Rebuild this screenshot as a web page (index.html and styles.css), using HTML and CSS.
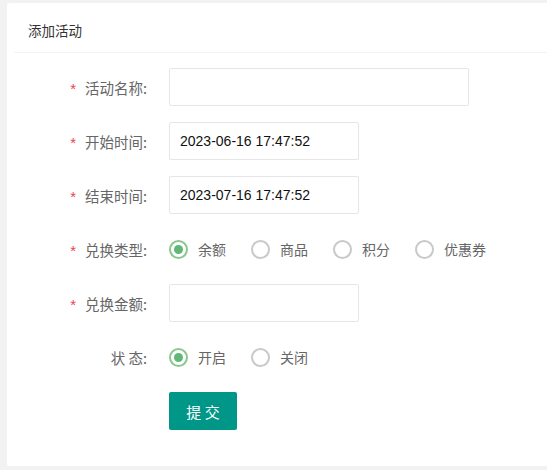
FILE: index.html
```html
<!DOCTYPE html>
<html lang="zh">
<head>
<meta charset="utf-8">
<link rel="stylesheet" href="styles.css">
</head>
<body>
<div class="card">
  <div class="card-header">添加活动</div>
  <form class="card-body">
    <div class="row">
      <label class="label"><span class="req">*</span>活动名称:</label>
      <input class="input wide" type="text" value="">
    </div>
    <div class="row">
      <label class="label"><span class="req">*</span>开始时间:</label>
      <input class="input" type="text" value="2023-06-16 17:47:52">
    </div>
    <div class="row">
      <label class="label"><span class="req">*</span>结束时间:</label>
      <input class="input" type="text" value="2023-07-16 17:47:52">
    </div>
    <div class="row">
      <label class="label"><span class="req">*</span>兑换类型:</label>
      <div class="radios">
        <span class="radio on"><i class="dot"></i>余额</span>
        <span class="radio"><i class="dot"></i>商品</span>
        <span class="radio"><i class="dot"></i>积分</span>
        <span class="radio"><i class="dot"></i>优惠券</span>
      </div>
    </div>
    <div class="row">
      <label class="label"><span class="req">*</span>兑换金额:</label>
      <input class="input" type="text" value="">
    </div>
    <div class="row">
      <label class="label">状 态:</label>
      <div class="radios">
        <span class="radio on"><i class="dot"></i>开启</span>
        <span class="radio"><i class="dot"></i>关闭</span>
      </div>
    </div>
    <div class="row">
      <span class="label"></span>
      <button class="btn" type="button">提 交</button>
    </div>
  </form>
</div>
</body>
</html>
```
FILE: styles.css
```css
html, body {
  margin: 0;
  padding: 0;
  background: #f2f2f2;
}
body {
  padding: 3px 0 4px 7px;
  font-family: "Liberation Sans", "Noto Sans CJK SC", sans-serif;
  font-size: 14px;
  color: #333;
}
.card {
  background: #fff;
  border-radius: 2px;
  height: 463px;
  box-sizing: border-box;
  width: 560px;
}
.card-header {
  margin-left: 7px;
  padding-left: 14px;
  height: 49px;
  border-bottom: 1px solid #f3f3f3;
  color: #333;
  font-family: "Noto Sans CJK SC", sans-serif;
  font-size: 13.5px;
  line-height: 54px;
  box-sizing: content-box;
}
.card-body {
  padding-top: 15px;
  display: flex;
  flex-direction: column;
  gap: 16px;
}
.row {
  display: flex;
  align-items: center;
  height: 38px;
}
.label {
  width: 140px;
  flex: none;
  margin-right: 22px;
  text-align: right;
  color: #666;
  font-family: "Noto Sans CJK SC", sans-serif;
  font-size: 14.5px;
}
.req {
  color: #e8454d;
  margin-right: 9px;
  font-family: "Liberation Sans", sans-serif;
  font-size: 15px;
}
.input {
  box-sizing: border-box;
  width: 190px;
  height: 38px;
  border: 1px solid #e6e6e6;
  border-radius: 2px;
  padding: 0 10px;
  font-family: "Liberation Sans", sans-serif;
  font-size: 14px;
  color: #111;
  background: #fff;
  outline: none;
}
.input.wide {
  width: 300px;
}
.radios {
  display: flex;
  align-items: center;
  gap: 25px;
}
.radio {
  display: flex;
  align-items: center;
  gap: 10px;
  color: #666;
  font-family: "Noto Sans CJK SC", sans-serif;
  font-size: 14px;
}
.dot {
  width: 19px;
  height: 19px;
  box-sizing: border-box;
  border: 2px solid #c9c9c9;
  border-radius: 50%;
  display: flex;
  align-items: center;
  justify-content: center;
}
.radio.on .dot {
  border-color: #8cc78f;
}
.radio.on .dot::after {
  content: "";
  width: 9px;
  height: 9px;
  border-radius: 50%;
  background: #5fb878;
}
.btn {
  width: 68px;
  height: 38px;
  border: none;
  border-radius: 2px;
  background: #009688;
  color: #fff;
  font-family: "Noto Sans CJK SC", sans-serif;
  font-size: 15px;
  padding: 0;
  cursor: pointer;
}
```
